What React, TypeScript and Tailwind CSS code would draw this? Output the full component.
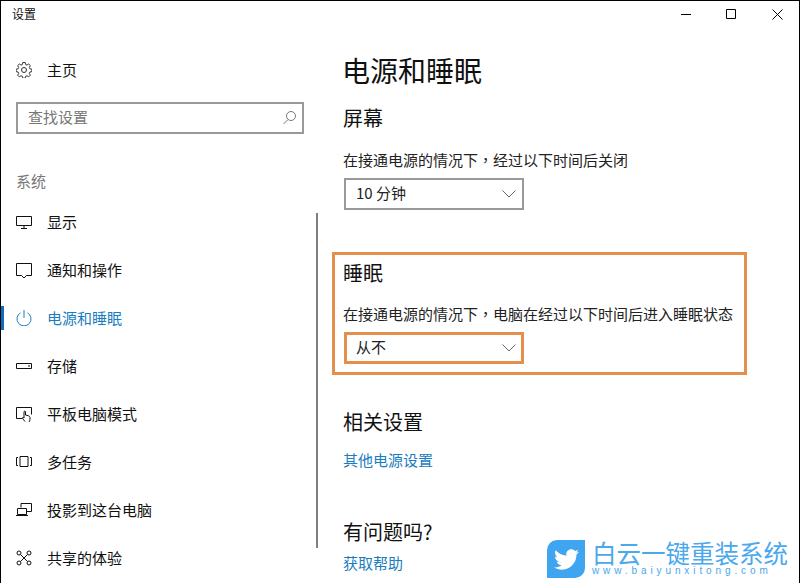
import { ReactNode } from "react";
import { FaTwitter } from "react-icons/fa";

const iconClass = "w-4 h-4 shrink-0";

const icons: Record<string, ReactNode> = {
  display: (
    <svg viewBox="0 0 16 16" className={iconClass} fill="none" stroke="currentColor">
      <path d="M0.5 2.5h15v9h-15zM8 11.5v3M5 14.5h6" />
    </svg>
  ),
  notify: (
    <svg viewBox="0 0 16 16" className={iconClass} fill="none" stroke="currentColor">
      <path d="M0.5 1.5h15v12h-5l-2.5 2.5-2.5-2.5h-5z" />
    </svg>
  ),
  power: (
    <svg viewBox="0 0 16 16" className={iconClass} fill="none" stroke="currentColor">
      <path d="M4.5 2.8a7 7 0 1 0 7 0M8 0v8" />
    </svg>
  ),
  storage: (
    <svg viewBox="0 0 16 16" className={iconClass} fill="none" stroke="currentColor">
      <path d="M0.5 5.5h15v5h-15z" />
      <path d="M12 8h2" />
    </svg>
  ),
  tablet: (
    <svg viewBox="0 0 16 16" className={iconClass} fill="none" stroke="currentColor">
      <path d="M6 12.5h-5.500v-11h15v7" />
      <path d="M9 15.500c-1-1-2-2.500-2.500-3.500 0-.8 1-.8 1.500 0v-6c0-1.200 1.500-1.200 1.500 0v3l3 .8c1 .3 1.500 1 1.500 2v1.500c0 1-.5 2-1 2.700" />
    </svg>
  ),
  tasks: (
    <svg viewBox="0 0 16 16" className={iconClass} fill="none" stroke="currentColor">
      <path d="M4 2.500h8v10h-8zM2 3.500h-1.500v8h1.500M14 3.500h1.500v8h-1.500" />
    </svg>
  ),
  project: (
    <svg viewBox="0 0 16 16" className={iconClass} fill="none" stroke="currentColor">
      <path d="M5 5.500v-4h10.500v8h-4.500" />
      <path d="M1.500 6.500h9v6h-9zM0 13.500h12" />
    </svg>
  ),
  share: (
    <svg viewBox="0 0 16 16" className={iconClass} fill="none" stroke="currentColor">
      <circle cx="3" cy="3" r="2" />
      <circle cx="13" cy="3" r="2" />
      <circle cx="3" cy="13" r="2" />
      <circle cx="13" cy="13" r="2" />
      <path d="M4.500 4.500l7 7M11.500 4.500l-7 7" />
    </svg>
  ),
};

const navItems = [
  { key: "display", label: "显示" },
  { key: "notify", label: "通知和操作" },
  { key: "power", label: "电源和睡眠", active: true },
  { key: "storage", label: "存储" },
  { key: "tablet", label: "平板电脑模式" },
  { key: "tasks", label: "多任务" },
  { key: "project", label: "投影到这台电脑" },
  { key: "share", label: "共享的体验" },
];

function Chevron() {
  return (
    <svg viewBox="0 0 14 8" className="w-[14px] h-2 text-[#666]" fill="none" stroke="currentColor">
      <path d="M0.500 0.500l6.500 6.500 6.500-6.500" />
    </svg>
  );
}

function Dropdown({ value, highlighted }: { value: string; highlighted?: boolean }) {
  return (
    <div
      className={
        highlighted
          ? "ml-px w-[180px] h-8 pl-[9px] pr-[5px] flex items-center justify-between border-[3px] border-[#e58f4b]"
          : "ml-px w-[180px] h-8 pl-[10px] pr-[6px] flex items-center justify-between border-2 border-[#999]"
      }
    >
      <span className="-mt-[2px] text-[15px] leading-5 text-[#222]">{value}</span>
      <Chevron />
    </div>
  );
}

// the comma sits mid-cell in the reference, which is how the TC font draws it
function Comma() {
  return <span className="font-['Noto_Sans_CJK_TC',sans-serif]">，</span>;
}

export default function App() {
  return (
    <div className="w-[800px] h-[583px] overflow-hidden bg-white border border-b-0 border-black text-[#111] font-['Noto_Sans_CJK_SC',sans-serif]">
      <header className="h-7 flex items-center justify-between">
        <span className="ml-[11px] -mt-[3px] text-xs leading-4">设置</span>
        <div className="-mt-[2px] flex items-center text-black">
          <svg viewBox="0 0 10 10" className="w-[10px] h-[10px]" stroke="currentColor">
            <path d="M0 5.500h10" />
          </svg>
          <svg viewBox="0 0 10 10" className="w-[10px] h-[10px] ml-[35px]" fill="none" stroke="currentColor">
            <path d="M0.500 0.500h9v9h-9z" />
          </svg>
          <svg viewBox="0 0 11 11" className="w-[11px] h-[11px] ml-[36px] mr-[16px]" stroke="currentColor">
            <path d="M0.500 0.500l10 10M10.500 0.500l-10 10" />
          </svg>
        </div>
      </header>

      <div className="flex">
        <aside className="relative w-[331px] shrink-0">
          <div className="mt-[17px] h-12 pl-[15px] flex items-center">
            <svg viewBox="0 0 16 16" className="w-4 h-4 text-[#333]" fill="none" stroke="currentColor">
              <circle cx="8" cy="8" r="2.500" />
              <path d="M6.800 0.500h2.400l.4 2 1.400.6 1.700-1.100 1.700 1.700-1.100 1.700.6 1.400 2 .4v2.400l-2 .4-.6 1.400 1.100 1.700-1.700 1.700-1.700-1.100-1.400.6-.4 2h-2.400l-.4-2-1.400-.6-1.700 1.100-1.700-1.700 1.100-1.700-.6-1.400-2-.4v-2.400l2-.4.6-1.400-1.100-1.700 1.700-1.700 1.700 1.100 1.400-.6z" />
            </svg>
            <span className="ml-[15px] text-[15px] leading-5">主页</span>
          </div>

          <div className="ml-[15px] mt-2 w-[288px] h-8 pl-[10px] pr-[6px] flex items-center justify-between border-2 border-[#999]">
            <span className="-mt-[2px] text-[15px] leading-5 text-[#777]">查找设置</span>
            <svg viewBox="0 0 13 13" className="-mt-[1px] w-[13px] h-[13px] text-[#777]" fill="none" stroke="currentColor">
              <circle cx="8" cy="5" r="4.500" />
              <path d="M5 8.500l-4.500 4.500" />
            </svg>
          </div>

          <div className="ml-[15px] mt-[37px] mb-[7px] text-[15px] leading-5 text-[#777]">系统</div>

          <nav>
            {navItems.map((item) => {
              return (
                <div
                  key={item.key}
                  className={
                    item.active
                      ? "relative h-12 pl-[15px] flex items-center text-[#1a7dc0]"
                      : "relative h-12 pl-[15px] flex items-center"
                  }
                >
                  {item.active && <span className="absolute left-0 top-3 w-[3px] h-6 bg-[#0f6cbd]" />}
                  {icons[item.key]}
                  <span className="ml-[15px] text-[15px] leading-5">{item.label}</span>
                </div>
              );
            })}
          </nav>

          <div className="absolute left-[315px] top-[184px] w-[2px] h-[335px] bg-[#808080]" />
        </aside>

        <main className="pl-[11px] w-[467px]">
          <h1 className="-ml-px mt-[21px] text-[28px] leading-10 text-[#111]">电源和睡眠</h1>

          <h2 className="mt-[14px] text-xl leading-7">屏幕</h2>
          <p className="mt-[17px] text-[15px] leading-[22px] text-[#222]">
            在接通电源的情况下<Comma />经过以下时间后关闭
          </p>
          <div className="mt-[7px]">
            <Dropdown value="10 分钟" />
          </div>

          <section className="-ml-[11px] mt-[42px] w-[415px] pl-[8px] pt-1 pb-2 border-[3px] border-[#e58f4b]">
            <h2 className="text-xl leading-7">睡眠</h2>
            <p className="mt-4 text-[15px] leading-[22px] whitespace-nowrap text-[#222]">
              在接通电源的情况下<Comma />电脑在经过以下时间后进入睡眠状态
            </p>
            <div className="mt-[7px]">
              <Dropdown value="从不" highlighted />
            </div>
          </section>

          <h2 className="mt-[33px] text-xl leading-7">相关设置</h2>
          <a className="block mt-[13px] text-[15px] leading-[22px] text-[#1a7dc0]">其他电源设置</a>

          <h2 className="mt-[47px] text-xl leading-7">有问题吗?</h2>
          <a className="block mt-[6px] text-[15px] leading-[22px] text-[#1a7dc0]">获取帮助</a>
        </main>
      </div>

      <div className="absolute left-[547px] top-[540px] flex">
        <div className="w-[38px] h-[38px] bg-[#3fa5f0] rounded-tl-[10px] rounded-br-[10px] flex items-center justify-center">
          <FaTwitter className="w-[25px] h-[25px] text-white" />
        </div>
        <div className="ml-[7px] w-[197px] text-[#4aa8ec]">
          <div className="text-[24.500px] leading-[25px] whitespace-nowrap">白云一键重装系统</div>
          <div className="mt-px font-['Liberation_Sans',sans-serif] text-[10px] leading-[10px] tracking-[3.900px] whitespace-nowrap">
            www.baiyunxitong.com
          </div>
        </div>
      </div>
    </div>
  );
}
